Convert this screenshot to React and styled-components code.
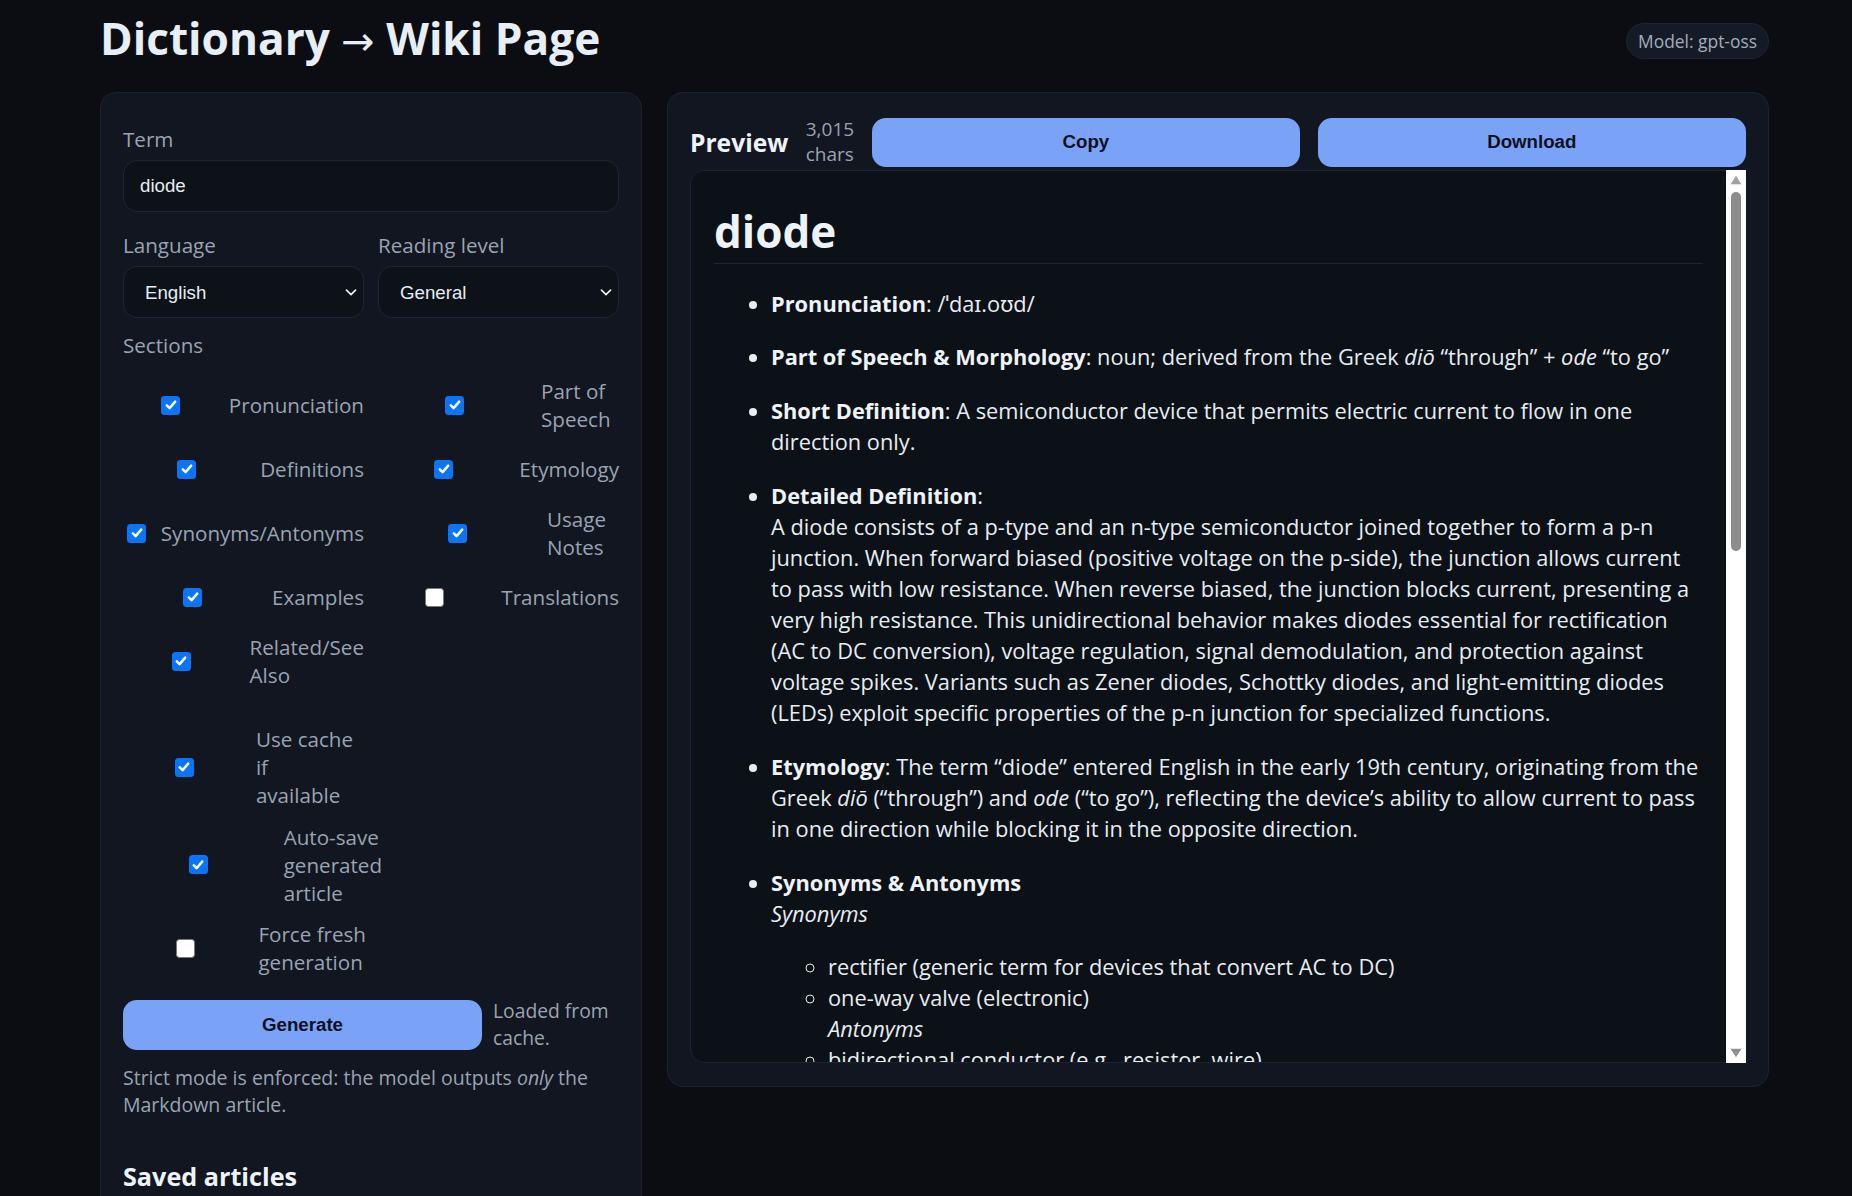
import React from "react";
import styled, { createGlobalStyle } from "styled-components";

const C = {
  page: "#0b0d12",
  panel: "#111621",
  panelBorder: "#1c2230",
  field: "#0d1118",
  fieldBorder: "#1f2633",
  text: "#e6edf3",
  strong: "#eef3f9",
  muted: "#9aa4b2",
  accent: "#7aa2f7",
  accentText: "#0b1020",
};

const GlobalStyle = createGlobalStyle`
  html, body { margin: 0; padding: 0; background: ${C.page}; overflow: hidden; }
  body { font-family: "Open Sans", "Noto Sans", "DejaVu Sans", sans-serif; color: ${C.text}; }
  * { box-sizing: border-box; }
`;

const Page = styled.div`
  width: 1852px;
  height: 1196px;
  overflow: hidden;
  padding: 0 83px 0 100px;
`;

const Header = styled.header`
  display: flex;
  justify-content: space-between;
  align-items: flex-start;
  height: 92px;
`;

const Title = styled.h1`
  margin: 12px 0 0;
  font-size: 44.2px;
  font-weight: 700;
  line-height: 52px;
  color: #e8eef6;
`;

const Arrow = styled.span`
  font-family: "DejaVu Sans", sans-serif;
  font-weight: 400;
  font-size: 0.9em;
`;

const Badge = styled.span`
  margin-top: 23px;
  height: 36px;
  padding: 0 11px;
  border-radius: 18px;
  background: #151b26;
  border: 1px solid #1e2532;
  color: #a3adbb;
  font-size: 17.4px;
  line-height: 34px;
  white-space: nowrap;
`;

const Main = styled.main`
  display: grid;
  grid-template-columns: 542px 1fr;
  column-gap: 25px;
  align-items: start;
`;

const Panel = styled.section`
  background: ${C.panel};
  border: 1px solid ${C.panelBorder};
  border-radius: 16px;
  padding: ${(p) => p.$pad};
`;

const Field = styled.div`
  display: flex;
  flex-direction: column;
  gap: 7px;
`;

const Label = styled.label`
  display: block;
  font-size: 20.6px;
  line-height: 28px;
  color: ${C.muted};
  margin-top: ${(p) => p.$mt || 0}px;
`;

const controlBase = `
  width: 100%;
  height: 52px;
  background: ${C.field};
  border: 1px solid ${C.fieldBorder};
  border-radius: 14px;
  color: ${C.text};
  font: 18.7px "Liberation Sans", Arial, sans-serif;
  outline: none;
`;

const TextInput = styled.input`
  ${controlBase}
  padding: 0 16px;
`;

const TwoCol = styled.div`
  display: grid;
  grid-template-columns: 1fr 1fr;
  column-gap: 14px;
  row-gap: ${(p) => p.$rowGap || 0}px;
  margin-top: ${(p) => p.$mt || 0}px;
`;

const SelectWrap = styled.div`
  position: relative;
`;

const Select = styled.select`
  ${controlBase}
  appearance: none;
  -webkit-appearance: none;
  padding: 0 40px 0 21px;
`;

const Chevron = styled.svg`
  position: absolute;
  right: 7px;
  top: 50%;
  margin-top: -3px;
  pointer-events: none;
`;

const CheckItem = styled.label`
  display: flex;
  align-items: center;
  gap: 10px;
  width: ${(p) => (p.$w ? `${p.$w}px` : "auto")};
`;

const CheckSlot = styled.span`
  flex: 1 1 0;
  min-width: 19px;
  display: flex;
  justify-content: center;
`;

const Box = styled.span`
  width: 19px;
  height: 19px;
  border-radius: 3.5px;
  display: flex;
  align-items: center;
  justify-content: center;
  background: ${(p) => (p.$on ? "#0b75f7" : "#ffffff")};
  border: ${(p) => (p.$on ? "none" : "1.3px solid #7a7a7a")};
`;

const CheckText = styled.span`
  flex: none;
  width: ${(p) => (p.$w ? `${p.$w}px` : "auto")};
  font-size: 20.6px;
  line-height: 28px;
  color: ${C.muted};
  white-space: nowrap;
`;

const OptionStack = styled.div`
  display: flex;
  flex-direction: column;
  gap: 13.5px;
  margin-top: 36px;
`;

const GenerateRow = styled.div`
  display: flex;
  align-items: center;
  gap: 11px;
  margin-top: 22px;
`;

const PrimaryButton = styled.button`
  flex: 1 1 0;
  height: ${(p) => p.$h || 50}px;
  border: none;
  border-radius: 14px;
  background: ${C.accent};
  color: ${C.accentText};
  font: 700 18.7px "Liberation Sans", Arial, sans-serif;
  cursor: pointer;
`;

const Status = styled.div`
  flex: none;
  width: 126px;
  font-size: 19.3px;
  line-height: 26.5px;
  color: ${C.muted};
`;

const Note = styled.p`
  margin: 13px 0 0;
  font-size: 19.5px;
  line-height: 27px;
  color: ${C.muted};
`;

const SubTitle = styled.h2`
  margin: ${(p) => p.$mt || 0}px 0 0;
  font-size: ${(p) => p.$size || 24.6}px;
  font-weight: 700;
  line-height: 31px;
  color: ${C.strong};
  white-space: nowrap;
`;

const PreviewHeader = styled.div`
  display: flex;
  align-items: center;
  gap: 17.5px;
  height: 50px;
`;

const CharCount = styled.div`
  flex: none;
  font-size: 19px;
  line-height: 25px;
  color: ${C.muted};
`;

const PreviewBox = styled.div`
  margin-top: 2.5px;
  height: 893px;
  display: flex;
  background: #0c1017;
  border: 1px solid #1c2330;
  border-radius: 14px;
`;

const Article = styled.article`
  flex: 1 1 0;
  min-width: 0;
  overflow: hidden;
  padding: 35px 23px 0 23px;
  border-radius: 14px 0 0 14px;
`;

const ArticleTitle = styled.h1`
  margin: 0;
  font-size: 44px;
  font-weight: 700;
  line-height: 50px;
  padding-bottom: 7px;
  border-bottom: 1px solid #1f2633;
  color: ${C.strong};
`;

const List = styled.ul`
  margin: ${(p) => p.$mt}px 0 0;
  padding-left: 57px;
  list-style: ${(p) => p.$type || "disc"};
  font-size: 21.8px;
  line-height: 30.95px;
  color: ${C.text};

  & > li + li {
    margin-top: ${(p) => p.$itemGap || 0}px;
  }
`;

const Item = styled.li`
  strong {
    font-weight: 700;
    color: ${C.strong};
  }
`;

const Scrollbar = styled.div`
  flex: none;
  width: 20px;
  margin: -1px -1px -1px 0;
  background: #ffffff;
  display: flex;
  flex-direction: column;
  align-items: center;
`;

const ScrollButton = styled.div`
  flex: none;
  height: 20px;
  width: 20px;
  display: flex;
  align-items: center;
  justify-content: center;
`;

const Track = styled.div`
  flex: 1 1 0;
  width: 100%;
  display: flex;
  justify-content: center;
`;

const Thumb = styled.div`
  margin-top: 2.5px;
  width: 10px;
  height: ${(p) => p.$h}px;
  border-radius: 5px;
  background: #8c8c8c;
`;

function Check({ on, children, w, textW }) {
  return (
    <CheckItem $w={w}>
      <CheckSlot>
        <Box $on={on}>
          {on && (
            <svg width="14" height="14" viewBox="0 0 13 13">
              <path d="M2.6 6.9 L5.2 9.4 L10.4 3.4" fill="none" stroke="#fff" strokeWidth="2.3" strokeLinecap="round" strokeLinejoin="round" />
            </svg>
          )}
        </Box>
      </CheckSlot>
      <CheckText $w={textW}>{children}</CheckText>
    </CheckItem>
  );
}

function ChevronIcon() {
  return (
    <Chevron width="12" height="7" viewBox="0 0 12 7">
      <path d="M1.5 1.2 L6 5.6 L10.5 1.2" fill="none" stroke="#e6edf3" strokeWidth="1.7" strokeLinecap="round" strokeLinejoin="round" />
    </Chevron>
  );
}

export default function App() {
  return (
    <>
      <GlobalStyle />
      <Page>
        <Header>
          <Title>Dictionary <Arrow>→</Arrow> Wiki Page</Title>
          <Badge>Model: gpt-oss</Badge>
        </Header>
        <Main>
          <Panel $pad="32px 22px 120px">
            <Field>
              <Label>Term</Label>
              <TextInput value="diode" readOnly />
            </Field>
            <TwoCol $mt={19}>
              <Field>
                <Label>Language</Label>
                <SelectWrap>
                  <Select defaultValue="English">
                    <option>English</option>
                  </Select>
                  <ChevronIcon />
                </SelectWrap>
              </Field>
              <Field>
                <Label>Reading level</Label>
                <SelectWrap>
                  <Select defaultValue="General">
                    <option>General</option>
                  </Select>
                  <ChevronIcon />
                </SelectWrap>
              </Field>
            </TwoCol>
            <Label $mt={13}>Sections</Label>
            <TwoCol $mt={18} $rowGap={22}>
              <Check on>Pronunciation</Check>
              <Check on textW={78}>Part of<br />Speech</Check>
              <Check on>Definitions</Check>
              <Check on>Etymology</Check>
              <Check on>Synonyms/Antonyms</Check>
              <Check on textW={72}>Usage<br />Notes</Check>
              <Check on>Examples</Check>
              <Check>Translations</Check>
              <Check on>Related/See<br />Also</Check>
            </TwoCol>
            <OptionStack>
              <Check on w={230}>Use cache<br />if<br />available</Check>
              <Check on w={259}>Auto-save<br />generated<br />article</Check>
              <Check w={243}>Force fresh<br />generation</Check>
            </OptionStack>
            <GenerateRow>
              <PrimaryButton>Generate</PrimaryButton>
              <Status>Loaded from cache.</Status>
            </GenerateRow>
            <Note>
              Strict mode is enforced: the model outputs <em>only</em> the Markdown article.
            </Note>
            <SubTitle $mt={43} $size={25.2}>Saved articles</SubTitle>
          </Panel>

          <Panel $pad="24px 22px 23px">
            <PreviewHeader>
              <SubTitle>Preview</SubTitle>
              <CharCount>3,015<br />chars</CharCount>
              <PrimaryButton $h={49}>Copy</PrimaryButton>
              <PrimaryButton $h={49}>Download</PrimaryButton>
            </PreviewHeader>
            <PreviewBox>
              <Article>
                <ArticleTitle>diode</ArticleTitle>
                <List $mt={25} $itemGap={23}>
                  <Item><strong>Pronunciation</strong>: /ˈdaɪ.oʊd/</Item>
                  <Item><strong>Part of Speech &amp; Morphology</strong>: noun; derived from the Greek <em>diō</em> “through” + <em>ode</em> “to go”</Item>
                  <Item><strong>Short Definition</strong>: A semiconductor device that permits electric current to flow in one direction only.</Item>
                  <Item>
                    <strong>Detailed Definition</strong>:<br />
                    A diode consists of a p-type and an n-type semiconductor joined together to form a p-n junction. When forward biased (positive voltage on the p-side), the junction allows current to pass with low resistance. When reverse biased, the junction blocks current, presenting a very high resistance. This unidirectional behavior makes diodes essential for rectification (AC to DC conversion), voltage regulation, signal demodulation, and protection against voltage spikes. Variants such as Zener diodes, Schottky diodes, and light-emitting diodes (LEDs) exploit specific properties of the p-n junction for specialized functions.
                  </Item>
                  <Item><strong>Etymology</strong>: The term “diode” entered English in the early 19th century, originating from the Greek <em>diō</em> (“through”) and <em>ode</em> (“to go”), reflecting the device’s ability to allow current to pass in one direction while blocking it in the opposite direction.</Item>
                  <Item>
                    <strong>Synonyms &amp; Antonyms</strong><br />
                    <em>Synonyms</em>
                    <List $mt={22.2} $type="circle">
                      <Item>rectifier (generic term for devices that convert AC to DC)</Item>
                      <Item>one-way valve (electronic)<br /><em>Antonyms</em></Item>
                      <Item>bidirectional conductor (e.g., resistor, wire)</Item>
                      <Item>unidirectional conductor</Item>
                    </List>
                  </Item>
                </List>
              </Article>
              <Scrollbar>
                <ScrollButton>
                  <svg width="12" height="10" viewBox="0 0 12 10"><path d="M6 0.8 L11.4 9.2 L0.6 9.2 Z" fill="#a3a3a3" /></svg>
                </ScrollButton>
                <Track>
                  <Thumb $h={359} />
                </Track>
                <ScrollButton>
                  <svg width="12" height="10" viewBox="0 0 12 10"><path d="M6 9.2 L11.4 0.8 L0.6 0.8 Z" fill="#8f8f8f" /></svg>
                </ScrollButton>
              </Scrollbar>
            </PreviewBox>
          </Panel>
        </Main>
      </Page>
    </>
  );
}
